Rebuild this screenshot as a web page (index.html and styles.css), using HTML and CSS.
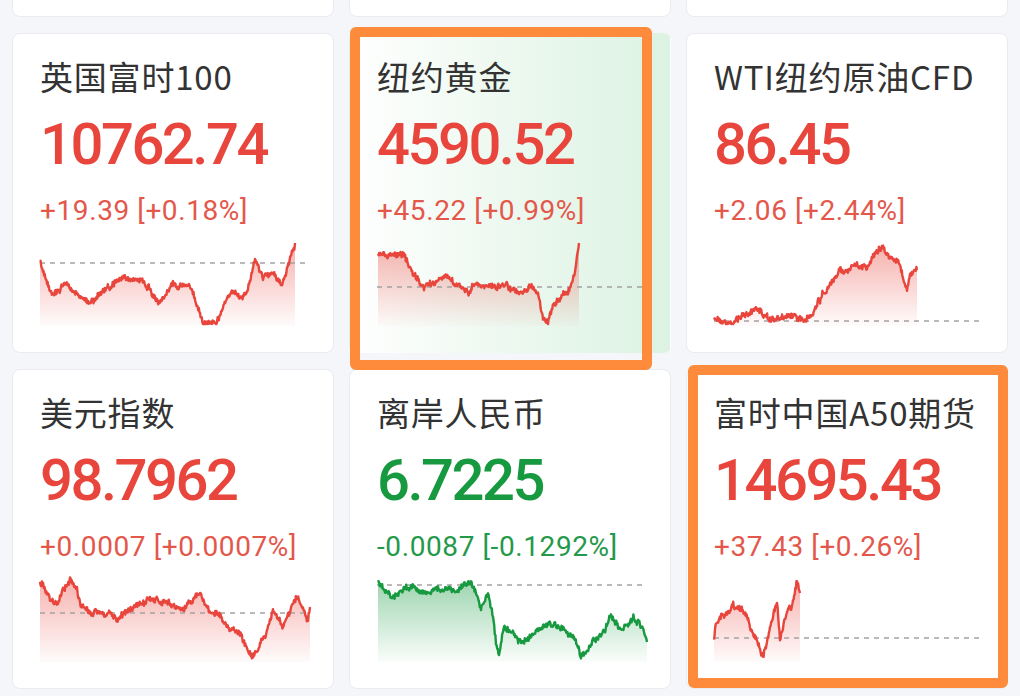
FILE: index.html
```html
<!DOCTYPE html>
<html lang="zh-CN">
<head>
  <meta charset="UTF-8" />
  <meta name="viewport" content="width=device-width,initial-scale=1.0"/>
  <title>全球行情</title>
  <link rel="stylesheet" href="styles.css">
</head>
<body>
  <div class="quote-grid">
    <!-- previous row, scrolled out of view -->
    <div class="card"></div>
    <div class="card"></div>
    <div class="card"></div>

    <div class="card">
      <div class="name">英国富时100</div>
      <div class="price up">10762.74</div>
      <div class="change up">+19.39 [+0.18%]</div>
      <svg class="spark" data-color="up" data-base="23"
        data-points="0,23 10,53 27,43 40,57 50,63 63,50 83,38 100,40 110,50 120,62 133,43 150,47 160,73 163,83 177,80 187,57 193,50 200,60 208,50 215,20 223,37 233,33 242,45 247,27 255,3"></svg>
    </div>

    <div class="card card-active">
      <div class="name">纽约黄金</div>
      <div class="price up">4590.52</div>
      <div class="change up">+45.22 [+0.99%]</div>
      <svg class="spark" data-color="up" data-base="47"
        data-points="1,13 14,17 27,17 37,37 47,47 71,38 91,53 97,43 114,47 131,47 144,53 154,47 161,53 166,82 171,80 177,63 184,58 191,53 197,37 202,3"></svg>
      <div class="mark mark-gold"></div>
    </div>

    <div class="card">
      <div class="name">WTI纽约原油CFD</div>
      <div class="price up">86.45</div>
      <div class="change up">+2.06 [+2.44%]</div>
      <svg class="spark" data-color="up" data-base="81"
        data-points="0,77 9,83 19,80 33,73 46,70 56,80 76,75 89,82 99,73 109,53 119,40 126,32 143,27 153,25 159,17 169,5 176,20 186,27 193,50 196,37 203,30"></svg>
    </div>

    <div class="card">
      <div class="name">美元指数</div>
      <div class="price up">98.7962</div>
      <div class="change up">+0.0007 [+0.0007%]</div>
      <svg class="spark" data-color="up" data-base="37"
        data-points="0,6 5,14 10,24 18,27 23,11 30,4 37,11 40,27 50,37 60,37 77,42 93,32 110,22 127,27 143,34 160,19 170,34 180,41 193,54 200,61 207,71 213,82 220,67 227,54 233,34 243,51 257,21 263,34 268,44 270,31"></svg>
    </div>

    <div class="card">
      <div class="name">离岸人民币</div>
      <div class="price down">6.7225</div>
      <div class="change down">-0.0087 [-0.1292%]</div>
      <svg class="spark" data-color="down" data-base="9"
        data-points="1,7 7,17 14,21 31,11 47,17 64,12 81,14 94,7 101,21 104,31 111,17 116,41 119,67 122,79 127,51 137,57 146,67 157,54 171,47 184,51 197,61 204,81 214,67 227,54 234,39 244,54 257,41 267,57 270,66"></svg>
    </div>

    <div class="card">
      <div class="name">富时中国A50期货</div>
      <div class="price up">14695.43</div>
      <div class="change up">+37.43 [+0.26%]</div>
      <svg class="spark" data-color="up" data-base="62"
        data-points="0,64 1,51 6,44 16,37 18,29 26,34 33,41 36,51 43,64 49,81 56,51 63,27 66,61 73,37 79,27 83,4 86,17"></svg>
      <div class="mark mark-a50"></div>
    </div>
  </div>

  <script src="charts.js"></script>
</body>
</html>
```

FILE: styles.css
```css
/* ---------- Page ---------- */
* {
  box-sizing: border-box;
}
html, body {
  margin: 0;
  height: 100%;
  overflow: hidden;
}
body {
  background-color: #f4f6f9;
  font-family: "Noto Sans CJK SC", "Noto Sans", sans-serif;
}

/* ---------- Grid (scrolled by one row) ---------- */
.quote-grid {
  display: grid;
  grid-template-columns: repeat(3, 1fr);
  grid-auto-rows: 320px;
  gap: 16px 15px;
  padding: 0 12px;
  margin-top: -303px;
}

/* ---------- Quote card ---------- */
.card {
  position: relative;
  background: #fff;
  border: 1px solid #e9ebef;
  border-radius: 8px;
  padding: 23px 22px 0 27px;
  display: flex;
  flex-direction: column;
}
.card-active {
  background: linear-gradient(90deg, #ffffff 0%, #eef9f1 45%, #dcf2e2 100%);
  border-color: transparent;
}

.name {
  font-size: 33px;
  line-height: 38px;
  letter-spacing: 0.8px;
  color: #333;
  white-space: nowrap;
}
.price {
  font-family: Roboto, sans-serif;
  font-weight: 500;
  font-size: 58px;
  line-height: 58px;
  letter-spacing: -2.5px;
  margin-top: 20px;
}
.change {
  font-family: Roboto, sans-serif;
  font-size: 28px;
  line-height: 28px;
  letter-spacing: 0.6px;
  margin-top: 24px;
}
.spark {
  display: block;
  width: 270px;
  height: 86px;
  margin-top: 15px;
  overflow: visible;
}

.price.up {
  color: #e8453c;
}
.change.up {
  color: #e4574b;
}
.price.down {
  color: #17993f;
}
.change.down {
  color: #24994a;
}

/* ---------- Highlight frames ---------- */
.mark {
  position: absolute;
  z-index: 2;
  border: 10px solid #fd8b3b;
  border-radius: 6px;
  pointer-events: none;
}
.mark-gold {
  left: 0;
  top: -7px;
  right: 18px;
  bottom: -18px;
}
.mark-a50 {
  left: 1px;
  top: -5px;
  right: -1px;
  bottom: 0;
}
```

FILE: charts.js
```js
// draws the little intraday sparklines from a few key points + seeded noise
(function () {
  var seed = 11;
  function rand() {
    seed = (seed * 16807) % 2147483647;
    return (seed - 1) / 2147483646;
  }

  var colors = {
    up: "#e8453c",
    down: "#16993f"
  };

  var W = 270, H = 86;

  document.querySelectorAll(".spark").forEach(function (svg, i) {
    var color = colors[svg.dataset.color];
    var base = parseFloat(svg.dataset.base);
    var keys = svg.dataset.points.trim().split(/\s+/).map(function (p) {
      var xy = p.split(",");
      return [parseFloat(xy[0]), parseFloat(xy[1])];
    });

    var pts = [];
    var drift = 0;
    for (var k = 0; k < keys.length - 1; k++) {
      var a = keys[k], b = keys[k + 1];
      var steps = Math.max(2, Math.round((b[0] - a[0]) / 0.6));
      for (var s = 0; s < steps; s++) {
        var t = s / steps;
        drift = drift * 0.8 + (rand() - 0.5) * 3.2;
        var y = a[1] + (b[1] - a[1]) * t + drift + (rand() - 0.5) * 4.5;
        y = Math.min(H - 2, Math.max(1, y));
        pts.push((a[0] + (b[0] - a[0]) * t).toFixed(1) + "," + y.toFixed(1));
      }
    }
    var last = keys[keys.length - 1];
    pts.push(last[0] + "," + last[1]);

    var first = keys[0];
    var line = "M" + pts.join(" L");
    var area = "M" + first[0] + "," + H + " L" + pts.join(" L") + " L" + last[0] + "," + H + " Z";
    var gid = "fill" + i;

    svg.setAttribute("viewBox", "0 0 " + W + " " + H);
    svg.innerHTML =
      '<defs><linearGradient id="' + gid + '" x1="0" y1="0" x2="0" y2="1">' +
      '<stop offset="0" stop-color="' + color + '" stop-opacity="0.42"/>' +
      '<stop offset="1" stop-color="' + color + '" stop-opacity="0.02"/>' +
      '</linearGradient></defs>' +
      '<path d="' + area + '" fill="url(#' + gid + ')"/>' +
      '<line x1="0" x2="' + W + '" y1="' + base + '" y2="' + base + '" stroke="#a3a3a3" stroke-width="1.5" stroke-dasharray="5 5"/>' +
      '<path d="' + line + '" fill="none" stroke="' + color + '" stroke-width="2.4" stroke-linejoin="round"/>';
  });
})();
```
